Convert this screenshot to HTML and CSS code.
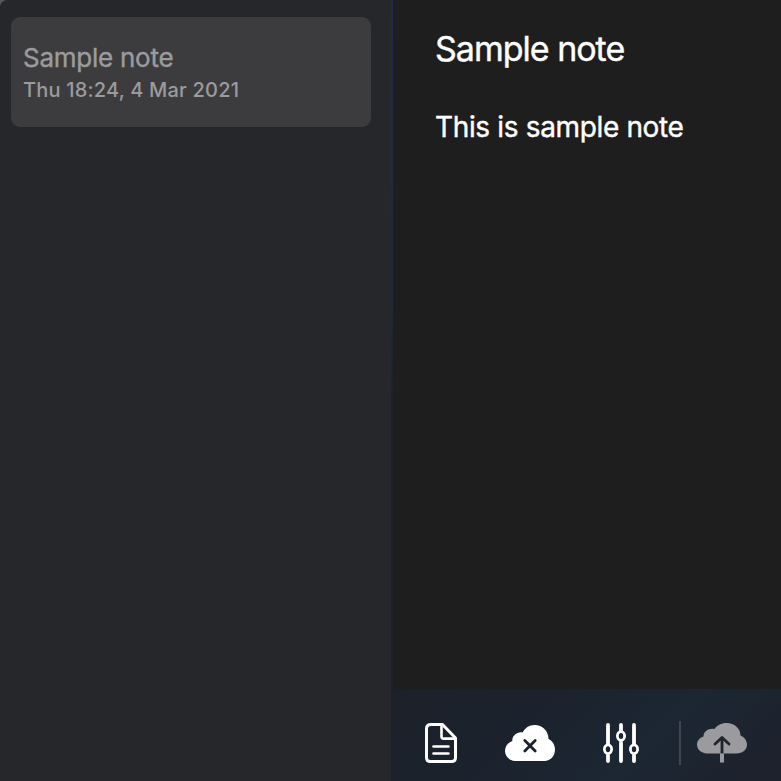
FILE: index.html
```
<!DOCTYPE html>
<html lang="en">
<head>
<meta charset="utf-8">
<title>Notes</title>
<link rel="stylesheet" href="styles.css">
</head>
<body>
<div class="app">
  <aside class="sidebar">
    <article class="note-card">
      <h2 class="note-title">Sample note</h2>
      <time class="note-date">Thu 18:24, 4 Mar 2021</time>
    </article>
  </aside>
  <main class="content">
    <section class="editor">
      <h1 class="editor-title">Sample note</h1>
      <p class="editor-text">This is sample note</p>
    </section>
    <footer class="toolbar">
      <svg class="icon icon-file" viewBox="0 0 34 42" fill="none" stroke="#fff" stroke-width="3" stroke-linejoin="round" stroke-linecap="round">
        <path d="M7 2.500H18.500L31.500 16V35.500Q31.500 39.500 27.500 39.500H6.500Q2.500 39.500 2.500 35.500V6.500Q2.500 2.500 7 2.500Z"/>
        <path d="M17.500 3V14.800Q17.500 16.600 19.500 16.600H31" stroke-width="2.600"/>
        <path d="M9.500 24.500H24.500M9.500 31.500H24.500" stroke-width="2.600"/>
      </svg>
      <svg class="icon icon-cloud-off" viewBox="0 0 50 42">
        <path fill="#fff" d="M10 37C4 36.500 0 32 0 27C0 22.500 3 18.500 7.300 17C7 12 12 7.500 17.500 8.500C20 4 24 1 29.500 1C37.500 1 43.500 7 43.500 15C47.500 17 50 21 50 25.500C50 32 45.500 37 39.500 37Z"/>
        <path d="M19.800 16.500L30.200 26.900M30.200 16.500L19.800 26.900" stroke="#1b222c" stroke-width="2.800" stroke-linecap="round"/>
      </svg>
      <svg class="icon icon-sliders" viewBox="0 0 38 42" fill="none" stroke="#fff" stroke-width="3.800" stroke-linecap="round">
        <path d="M6 3V21.500M6 33.500V39M19 3V8.500M19 20.500V39M32 3V21.500M32 33.500V39"/>
        <g stroke-width="2.800"><ellipse cx="6" cy="27.300" rx="3.600" ry="4.400"/><ellipse cx="19" cy="14" rx="3.600" ry="4.400"/><ellipse cx="32" cy="27.300" rx="3.600" ry="4.400"/></g>
      </svg>
      <span class="divider"></span>
      <svg class="icon icon-upload" viewBox="0 0 50 42">
        <path fill="#9b9a9f" d="M10 31.500C4 31 0 27.500 0 22.500C0 18.500 3 15.500 6.500 14.500C6.500 9.500 11.500 6 17.500 7C20 3.500 24 1 29.500 1C37.500 1 43.500 6.500 43.500 13.500C47.500 15 50 19 50 22.500C50 28 45.500 31.500 39.500 31.500Z"/>
        <path d="M25 16V31.500" stroke="#1c242e" stroke-width="2.800"/>
        <path d="M18 22L25 15.500L32 22" fill="none" stroke="#1c242e" stroke-width="2.800" stroke-linecap="round" stroke-linejoin="round"/>
        <path d="M25 31.500V40.500" stroke="#9b9a9f" stroke-width="4"/>
      </svg>
    </footer>
  </main>
</div>
</body>
</html>
```
FILE: styles.css
```
* { box-sizing: border-box; }
body {
  margin: 0;
  background: #55565a;
  font-family: Inter, "Liberation Sans", sans-serif;
}
h1, h2, p { margin: 0; font-weight: 400; white-space: nowrap; }
.app {
  display: flex;
  width: 781px;
  height: 781px;
  overflow: hidden;
  border-top-left-radius: 8px;
  background: #25272b;
}
.sidebar {
  width: 391px;
  padding: 17px 20px 0 11px;
  background: #25272b;
}
.note-card {
  height: 110px;
  padding: 25px 12px 0;
  border-radius: 9px;
  background: #3c3c3e;
  color: #9b9b9d;
}
.note-title {
  font-size: 26px;
  line-height: 32px;
  letter-spacing: -0.25px;
  -webkit-text-stroke: 0.4px currentColor;
}
.note-date {
  display: block;
  font-size: 20px;
  font-weight: 500;
  line-height: 32px;
  letter-spacing: 0.2px;
}
.content {
  width: 390px;
  display: flex;
  flex-direction: column;
  background: linear-gradient(180deg, #1b2b48 0, #1b2a43 280px, #1c222c 400px, #1b222c 100%);
}
.editor {
  height: 689px;
  margin-left: 2px;
  padding: 28px 0 0 42px;
  background: #1e1e1e;
  color: #fff;
  -webkit-text-stroke: 0.4px currentColor;
}
.editor-title {
  font-size: 34px;
  line-height: 42px;
  letter-spacing: -1px;
}
.editor-text {
  margin-top: 40px;
  font-size: 28px;
  line-height: 34px;
  letter-spacing: -0.35px;
}
.toolbar {
  height: 92px;
  display: flex;
  padding: 32px 0 0 33px;
  background: linear-gradient(135deg, #1c2129 0%, #1b222d 35%, #1c2733 65%, #1d212b 100%);
}
.icon { display: block; height: 42px; flex: none; }
.icon-file { width: 34px; margin-top: 1px; }
.icon-cloud-off { width: 50px; margin: 3px 0 0 47px; }
.icon-sliders { width: 38px; margin: 1px 0 0 47px; }
.divider {
  width: 2px;
  height: 44px;
  margin-left: 39px;
  background: #41464e;
}
.icon-upload { width: 50px; margin: 1px 0 0 16px; }
```
